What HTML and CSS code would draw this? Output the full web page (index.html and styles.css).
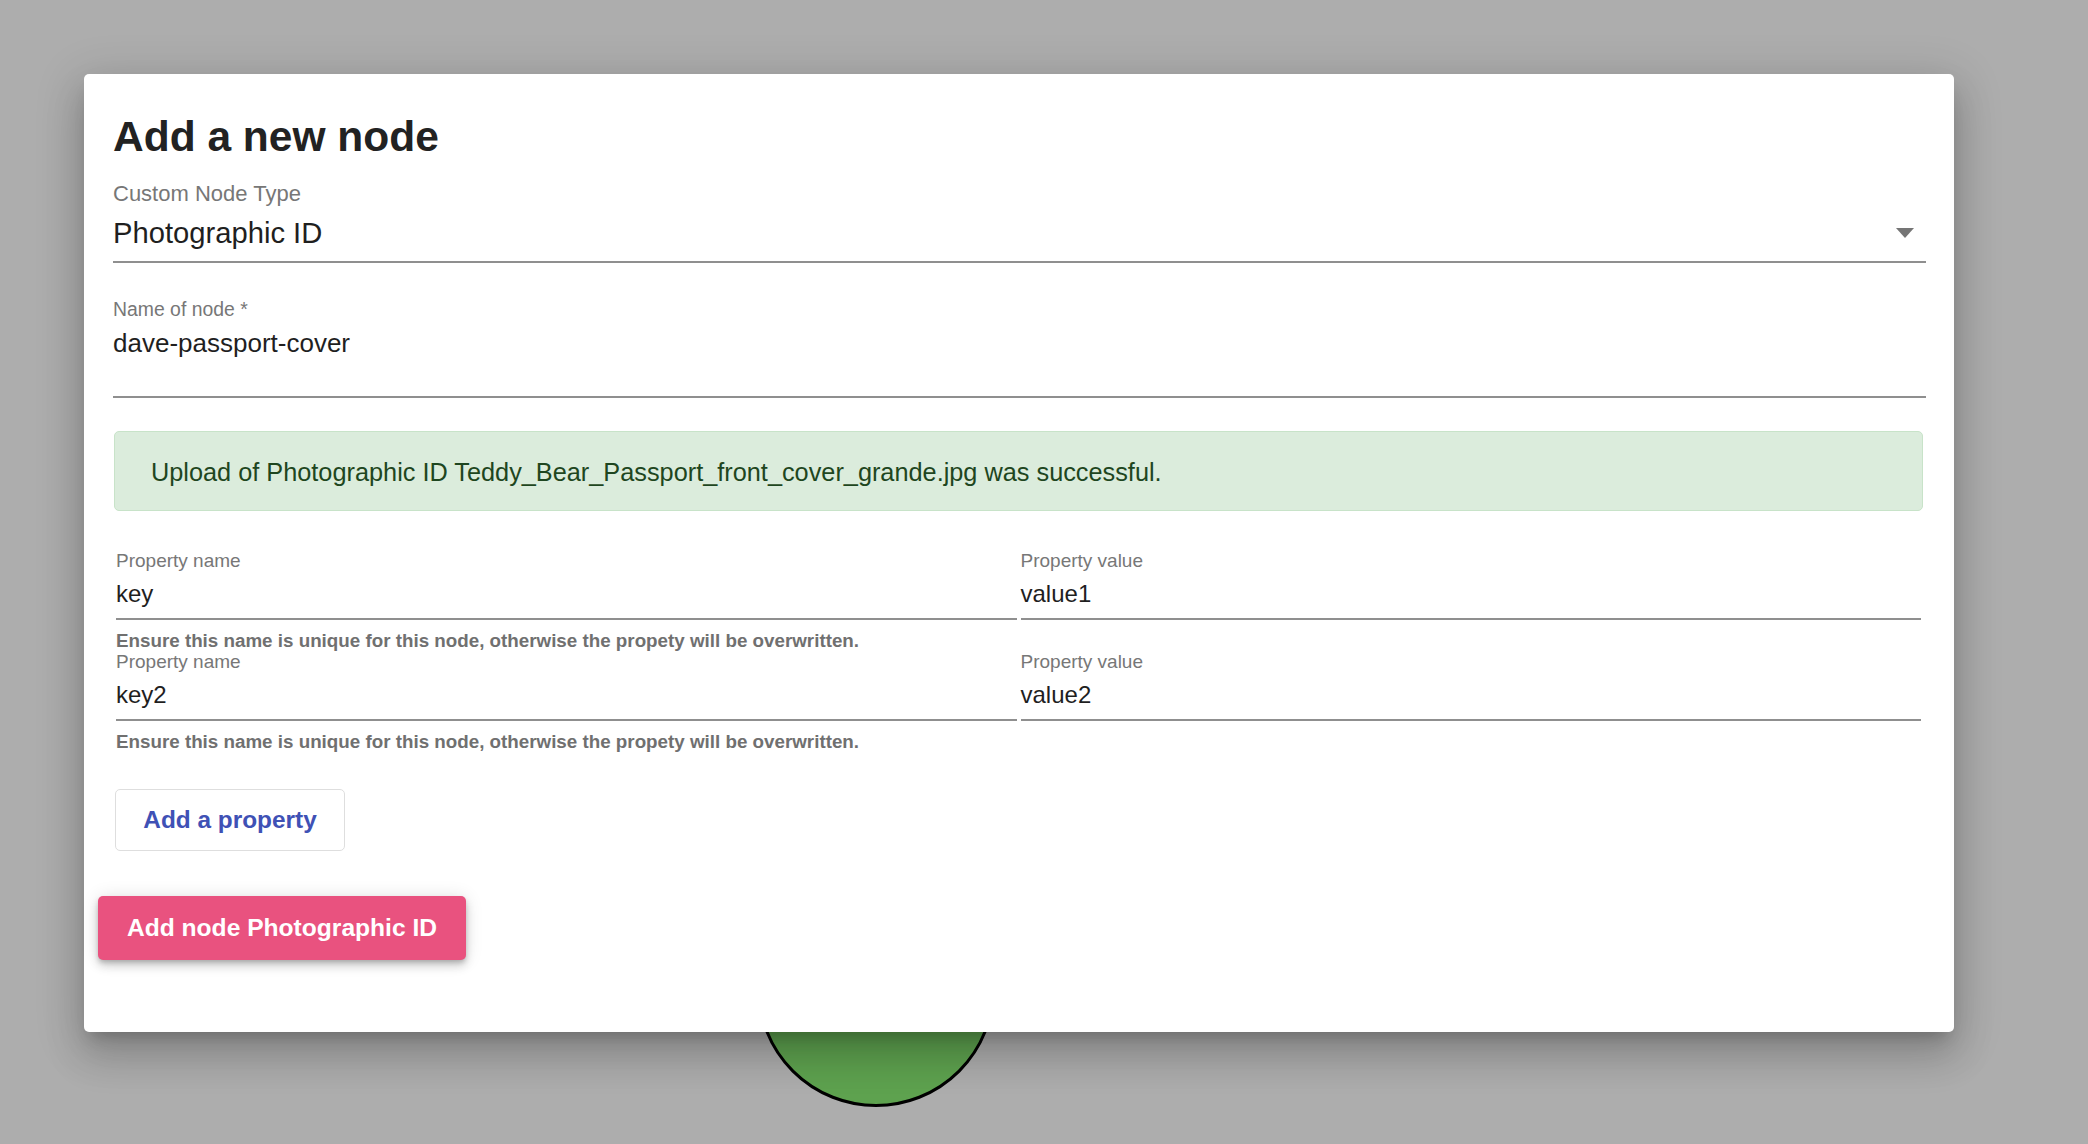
FILE: index.html
```html
<!DOCTYPE html>
<html lang="en">
<head>
<meta charset="utf-8">
<title>Add a new node</title>
<link rel="stylesheet" href="styles.css">
</head>
<body>
<div class="canvas">
  <div class="graph-node"></div>
</div>
<div class="dialog">
  <h1 class="dialog-title">Add a new node</h1>

  <div class="field select-field">
    <div class="field-label label-lg">Custom Node Type</div>
    <div class="select-value">
      <span class="value value-lg">Photographic ID</span>
      <svg class="select-arrow" width="18" height="10" viewBox="0 0 18 10"><path d="M0 0 L18 0 L9 10 Z" fill="#757575"/></svg>
    </div>
  </div>

  <div class="field name-field">
    <div class="field-label">Name of node *</div>
    <div class="value value-name">dave-passport-cover</div>
  </div>

  <div class="alert">Upload of Photographic ID Teddy_Bear_Passport_front_cover_grande.jpg was successful.</div>

  <div class="props">
    <div class="prop-row">
      <div class="prop-col">
        <div class="field prop-field">
          <div class="field-label">Property name</div>
          <div class="value value-prop">key</div>
        </div>
        <div class="helper">Ensure this name is unique for this node, otherwise the propety will be overwritten.</div>
      </div>
      <div class="prop-col">
        <div class="field prop-field">
          <div class="field-label">Property value</div>
          <div class="value value-prop">value1</div>
        </div>
      </div>
    </div>
    <div class="prop-row">
      <div class="prop-col">
        <div class="field prop-field">
          <div class="field-label">Property name</div>
          <div class="value value-prop">key2</div>
        </div>
        <div class="helper">Ensure this name is unique for this node, otherwise the propety will be overwritten.</div>
      </div>
      <div class="prop-col">
        <div class="field prop-field">
          <div class="field-label">Property value</div>
          <div class="value value-prop">value2</div>
        </div>
      </div>
    </div>
  </div>

  <button class="btn-outline" type="button">Add a property</button>
  <div class="submit-wrap">
    <button class="btn-submit" type="button">Add node Photographic ID</button>
  </div>
</div>
</body>
</html>
```

FILE: styles.css
```css
html, body {
  margin: 0;
  padding: 0;
}
body {
  width: 2088px;
  height: 1144px;
  overflow: hidden;
  background: #adadad;
  font-family: "Liberation Sans", Arial, Helvetica, sans-serif;
  position: relative;
  padding-top: 74px;
  box-sizing: border-box;
}
.canvas {
  position: absolute;
  left: 0;
  top: 0;
  width: 2088px;
  height: 1144px;
}
.graph-node {
  position: absolute;
  left: 757px;
  top: 869px;
  width: 238px;
  height: 238px;
  box-sizing: border-box;
  border-radius: 50%;
  border: 3px solid #000;
  background: #5ea24f;
}
.dialog {
  position: relative;
  margin-left: 84px;
  width: 1870px;
  height: 958px;
  box-sizing: border-box;
  background: #fff;
  border-radius: 5px;
  padding: 38px 28px 0 29px;
  box-shadow: 0 11px 15px -7px rgba(0,0,0,.2), 0 24px 38px 3px rgba(0,0,0,.14), 0 9px 46px 8px rgba(0,0,0,.12);
}
.dialog-title {
  margin: 0;
  font-size: 42.5px;
  line-height: 50px;
  font-weight: 700;
  color: #222;
}
.field-label {
  font-size: 19px;
  line-height: 21px;
  color: #777;
}
.field-label.label-lg {
  font-size: 22px;
  line-height: 24px;
}
.name-field .field-label {
  font-size: 19.4px;
}
.value {
  color: #1f1f1f;
}
.select-field {
  margin-top: 20px;
  border-bottom: 2px solid #8f8f8f;
}
.select-value {
  margin-top: 11px;
  padding-bottom: 12px;
  display: flex;
  align-items: center;
  justify-content: space-between;
}
.value-lg {
  font-size: 29.2px;
  line-height: 32px;
}
.select-arrow {
  margin-right: 12px;
  display: block;
}
.name-field {
  margin-top: 36px;
  border-bottom: 2px solid #8f8f8f;
}
.value-name {
  margin-top: 10px;
  font-size: 26px;
  line-height: 26px;
  padding-bottom: 40px;
}
.alert {
  margin: 33px 3px 0 1px;
  height: 80px;
  box-sizing: border-box;
  padding: 26px 36px 24px;
  border: 1px solid #c8e3c9;
  border-radius: 5px;
  background: #dbecdc;
  color: #1e4620;
  font-size: 25.3px;
  line-height: 28px;
}
.props {
  margin: 39px 5px 0 3px;
}
.prop-row {
  display: flex;
  gap: 4px;
}
.prop-col {
  flex: 1 1 0;
  min-width: 0;
}
.prop-field {
  border-bottom: 2px solid #8f8f8f;
}
.value-prop {
  margin-top: 10px;
  font-size: 24px;
  line-height: 26px;
  padding-bottom: 11px;
}
.helper {
  margin-top: 10px;
  font-size: 18.8px;
  line-height: 21px;
  font-weight: 700;
  color: #707070;
}
.btn-outline {
  display: block;
  margin: 37px 0 0 2px;
  height: 62px;
  width: 230px;
  box-sizing: border-box;
  padding: 16px 0;
  background: #fff;
  border: 1px solid #dedede;
  border-radius: 5px;
  color: #3f51b5;
  font-family: inherit;
  font-size: 24.4px;
  line-height: 28px;
  font-weight: 700;
}
.submit-wrap {
  margin: 45px 0 0 -15px;
}
.btn-submit {
  display: block;
  width: 368px;
  height: 64px;
  box-sizing: border-box;
  padding: 18px 0;
  border: none;
  border-radius: 5px;
  background: #e9527f;
  color: #fff;
  font-family: inherit;
  font-size: 24.6px;
  line-height: 28px;
  font-weight: 700;
  box-shadow: 0 3px 5px -1px rgba(0,0,0,.2), 0 6px 10px 0 rgba(0,0,0,.14), 0 1px 18px 0 rgba(0,0,0,.12);
}
```
